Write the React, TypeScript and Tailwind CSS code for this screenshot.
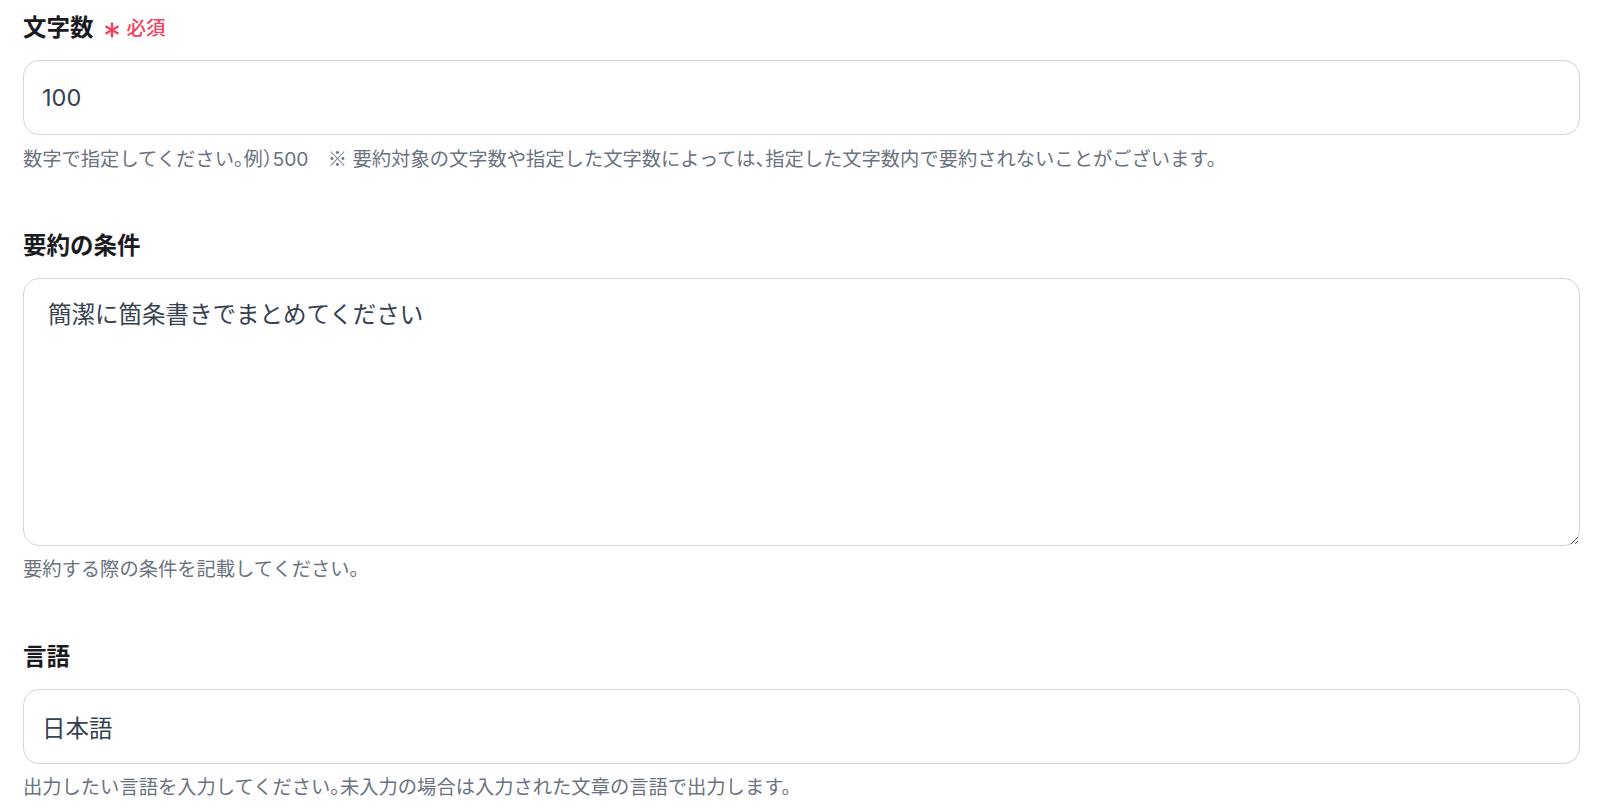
import React, { useState } from 'react'

const font = "font-['Inter','Noto_Sans_CJK_JP',sans-serif]"

function RequiredMark() {
  return (
    <svg width="16" height="16" viewBox="0 0 16 16" className="mt-[4px]">
      <g stroke="currentColor" strokeWidth="2.4" strokeLinecap="butt">
        <line x1="8" y1="0.5" x2="8" y2="15.5" />
        <line x1="1.5" y1="4.25" x2="14.5" y2="11.75" />
        <line x1="1.5" y1="11.75" x2="14.5" y2="4.25" />
      </g>
    </svg>
  )
}

function Label({ text, required }: { text: string; required?: boolean }) {
  return (
    <div className="flex items-center h-[35px] mb-[15px]">
      <span className="text-[23.5px] leading-[35px] font-bold text-[#1b1b1f]">{text}</span>
      {required && (
        <span className="flex items-center ml-[10px] text-[#f43f5e]">
          <RequiredMark />
          <span className="ml-[7px] mt-[3px] text-[19.5px] font-medium">必須</span>
        </span>
      )}
    </div>
  )
}

function Help({ children }: { children: React.ReactNode }) {
  return (
    <p className="mt-[9px] h-[28px] text-[19.3px] leading-[28px] text-[#6b7280] whitespace-nowrap [font-feature-settings:'halt']">
      {children}
    </p>
  )
}

export default function App() {
  const [count, setCount] = useState('100')
  const [cond, setCond] = useState('簡潔に箇条書きでまとめてください')
  const [lang, setLang] = useState('日本語')

  return (
    <div className={`${font} bg-white min-h-screen pt-[10px] pl-[23px] pr-[20px]`}>
      {/* 文字数 */}
      <div>
        <Label text="文字数" required />
        <input
          type="text"
          value={count}
          onChange={e => setCount(e.target.value)}
          className="block w-full h-[75px] px-[18px] rounded-[16px] border border-[#cfd5de] bg-white text-[23.5px] text-[#374151] outline-none"
        />
        <Help>
          数字で指定してください。例）500　<span className="font-['Noto_Sans_CJK_JP',sans-serif]">※</span> 要約対象の文字数や指定した文字数によっては、指定した文字数内で要約されないことがございます。
        </Help>
      </div>

      {/* 要約の条件 */}
      <div className="mt-[56px]">
        <Label text="要約の条件" />
        <textarea
          value={cond}
          onChange={e => setCond(e.target.value)}
          className="block w-full h-[268px] px-[24px] py-[18px] rounded-[16px] border border-[#cfd5de] bg-white text-[23.5px] leading-[35px] text-[#374151] outline-none resize-y"
        />
        <Help>要約する際の条件を記載してください。</Help>
      </div>

      {/* 言語 */}
      <div className="mt-[56px]">
        <Label text="言語" />
        <input
          type="text"
          value={lang}
          onChange={e => setLang(e.target.value)}
          className="block w-full h-[75px] px-[18px] rounded-[16px] border border-[#cfd5de] bg-white text-[23.5px] text-[#374151] outline-none"
        />
        <Help>出力したい言語を入力してください。未入力の場合は入力された文章の言語で出力します。</Help>
      </div>
    </div>
  )
}
